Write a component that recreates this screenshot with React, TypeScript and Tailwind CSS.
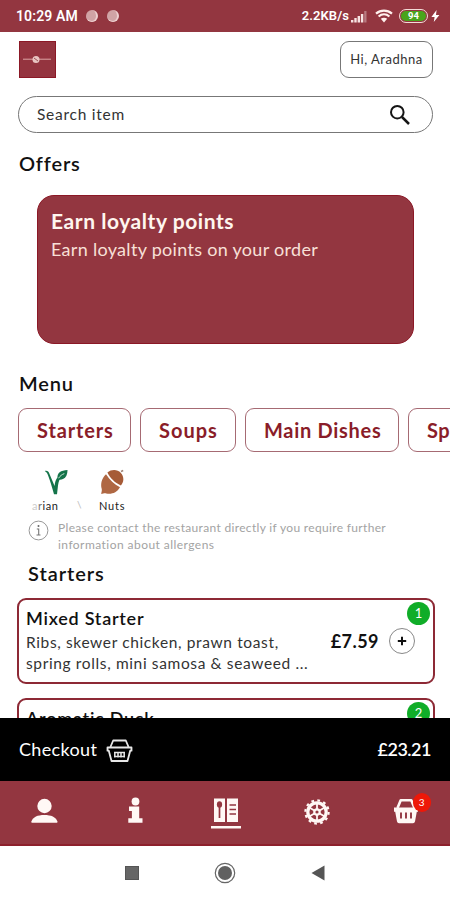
interface Category {
  label: string;
  width: string;
  tracking: string;
}

interface Dish {
  name: string;
  lines: string[];
  price?: string;
  count: number;
}

const categories: Category[] = [
  { label: 'Starters', width: 'w-[113px]', tracking: 'tracking-[0.85px]' },
  { label: 'Soups', width: 'w-24', tracking: 'tracking-[1px]' },
  { label: 'Main Dishes', width: 'w-[154px]', tracking: 'tracking-[0.7px]' },
  { label: 'Sp', width: 'w-[120px]', tracking: 'tracking-[0.5px]' },
];

const dishes: Dish[] = [
  {
    name: 'Mixed Starter',
    lines: ['Ribs, skewer chicken, prawn toast,', 'spring rolls, mini samosa & seaweed ...'],
    price: '£7.59',
    count: 1,
  },
  {
    name: 'Aromatic Duck',
    lines: [],
    count: 2,
  },
];

function StatusBar() {
  return (
    <div className="flex h-8 shrink-0 items-center justify-between bg-[#933640] pl-4 pr-[10px] font-['Roboto',sans-serif] text-white">
      <div className="flex items-center">
        <span className="w-[63px] whitespace-nowrap text-[14px] font-semibold tracking-[0.12px]">10:29 AM</span>
        <span className="ml-[7px] h-3 w-3 rounded-full border-r-2 border-b border-[#eed0d0] bg-[#d0a3a5]" />
        <span className="ml-[9px] h-3 w-3 rounded-full border-r-2 border-b border-[#eed0d0] bg-[#d0a3a5]" />
      </div>
      <div className="flex items-center">
        <span className="text-[13px] font-semibold tracking-[0.1px]">2.2KB/s</span>
        <svg className="ml-[2px]" width="17" height="13" viewBox="0 0 17 13">
          <path d="M0 10h2.4v2.5H0zM3.3 8h2.4v4.5H3.3zM6.6 6H9v6.5H6.6zM9.9 4h2.4v8.5H9.9z" fill="#f7e4e3" />
          <path d="M13.2 1h2.3v11.5h-2.3z" fill="#b87b81" />
        </svg>
        <svg className="ml-[7px]" width="18" height="14" viewBox="0 0 18 14" fill="none" stroke="#fff1ee" strokeWidth="2.2">
          <path d="M1 4.6C5.7.6 12.3.6 17 4.6M3.6 7.5c3.2-2.8 7.6-2.8 10.8 0" />
          <path d="M5.8 9.8c1.8-1.5 4.6-1.5 6.4 0L9 13.5z" fill="#fff1ee" stroke="none" />
        </svg>
        <span className="ml-[6px] flex h-[14px] w-[29px] items-center justify-center rounded-full border border-[#f3dcd8] p-px">
          <span className="flex h-full w-full items-center justify-center rounded-full bg-[#49a51c] text-[9.5px] font-bold">94</span>
        </span>
        <svg className="ml-[3px]" width="9" height="12" viewBox="0 0 9 12">
          <path d="M5.6 0 .4 7h3.2L2.8 12l5.6-7H5z" fill="#fff" />
        </svg>
      </div>
    </div>
  );
}

function TopBar() {
  return (
    <div className="mt-[9px] flex h-9 items-start justify-between pl-[19px] pr-[17px]">
      <div className="flex h-[37px] w-[37px] items-center justify-center border border-[#8b1826] bg-[#94343f]">
        <svg width="31" height="9" viewBox="0 0 31 9">
          <path d="M1 4.2h28" stroke="#dca6a6" strokeWidth="1" />
          <circle cx="14" cy="4.5" r="3.5" fill="#e9c5c2" />
          <path d="m12 3 4 3" stroke="#9c5157" />
        </svg>
      </div>
      <div className="flex h-[37px] w-[93px] items-center justify-center rounded-[9px] border border-[#777] text-[13px] tracking-[0.5px] text-[#333]">
        Hi, Aradhna
      </div>
    </div>
  );
}

function SearchBox() {
  return (
    <div className="ml-[18px] mr-[17px] mt-[19px] flex h-[37px] items-center justify-between rounded-full border border-[#777] pl-[18px] pr-[21px]">
      <span className="text-[15.5px] tracking-[0.75px] text-[#333]">Search item</span>
      <svg width="22" height="22" viewBox="0 0 22 22" fill="none" stroke="#151515">
        <circle cx="8.3" cy="8.2" r="6.3" strokeWidth="2" />
        <path d="m13 13 7 7" strokeWidth="2.5" />
      </svg>
    </div>
  );
}

function Allergens() {
  return (
    <div className="flex h-[62px] pl-8 pt-[17px] text-[11px] text-[#222]">
      <div className="flex w-[45px] flex-col">
        <svg className="ml-3 shrink-0" width="25" height="27" viewBox="0 0 25 27">
          <path d="M.8 2c2.5-.6 3.8.5 4.5 2.5L10.6 17C11.2 10.500 13.2 7.500 18.500 5.500 15.800 9 14.600 12 14 16.500l-1 8.700h-3C8 18 6 11.500 4.100 6.400 3.300 4.300 2.600 3.200.8 2z" fill="#14744a" />
          <path d="M13.7 9.6C12.300 4.400 17 1.200 23.500 1.100c-.1 7-3.400 9.900-8.300 9.600" fill="#14744a" />
          <path d="M14.500 9.300c1.700-2.500 3.400-3.800 5.800-4.700" stroke="#cae4d7" strokeWidth="1" fill="none" />
        </svg>
        <span className="mt-[3px] leading-[14px] tracking-[0.55px]">
          <span className="text-[#ccc]">a</span>
          <span className="text-[#777]">r</span>ian
        </span>
      </div>
      <span className="mt-[28px] w-[22px] text-[10px] leading-[14px] text-[#bbb]">\</span>
      <div className="flex flex-col">
        <svg className="shrink-0" width="27" height="27" viewBox="0 0 27 27">
          <path d="M8.4 3.5C12.2.2 18.4.2 21.7 3.7c3.700 4.100 3.300 9.300.200 12.700C15.500 13.500 11.500 9.500 8.400 3.500z" fill="#a65b37" />
          <path d="M7 5.200c3.800 5.800 8 9.800 14 13-3.200 5.600-8.300 7.200-13.800 6.200-1.900-.4-3 .3-5 .5.200-2.200 1-3.200.5-5.200C1.300 14.800 2.800 9 7 5.200z" fill="#af6743" />
          <path d="m22 2.500 2.200-1" stroke="#a08679" strokeWidth="1.5" />
        </svg>
        <span className="mt-[3px] leading-[14px] tracking-[0.8px]">Nuts</span>
      </div>
    </div>
  );
}

function DishCard({ dish }: { dish: Dish }) {
  return (
    <div className="relative flex h-[86px] shrink-0 justify-between rounded-[9px] border-2 border-[#8d2935] bg-white pl-[7px] pt-[6px]">
      <div>
        <h3 className="mb-[2px] text-[18px] font-semibold leading-6 tracking-[0.75px] text-[#111]">{dish.name}</h3>
        {dish.lines.map((line) => (
          <p key={line} className="whitespace-nowrap text-[15.5px] leading-[21px] tracking-[0.63px] text-[#333]">
            {line}
          </p>
        ))}
      </div>
      {dish.price && (
        <div className="mr-[18px] mt-[22px] flex h-[26px] items-center gap-[10px]">
          <span className="text-[18px] font-bold tracking-[0.45px] text-[#111]">{dish.price}</span>
          <span className="flex h-[26px] w-[26px] items-center justify-center rounded-full border border-[#888]">
            <svg width="10" height="10" viewBox="0 0 10 10">
              <path d="M5 .8v8.4M.8 5h8.4" stroke="#111" strokeWidth="2" />
            </svg>
          </span>
        </div>
      )}
      <span className="absolute right-[3px] top-[2px] flex h-[23px] w-[23px] items-center justify-center rounded-full bg-[#10ad28] text-[13px] text-white">
        {dish.count}
      </span>
    </div>
  );
}

function CheckoutBar() {
  return (
    <div className="z-10 flex h-[63px] shrink-0 items-center justify-between bg-black pl-[19px] pr-[19px] text-white">
      <div className="flex items-center gap-[9px]">
        <span className="text-[18px] tracking-[0.35px]">Checkout</span>
        <svg className="mt-[3px]" width="27" height="24" viewBox="0 0 27 24" fill="none" stroke="#e8e8e8" strokeWidth="1.8">
          <path d="M4.2 8.500 7.200 1.500h12.600l3 7M1.500 8.500h24v3.200h-1.300L21.500 22h-16L2.800 11.700H1.500z" strokeLinejoin="round" />
          <path d="M8.800 13v5.500M12 13v5.500M15 13v5.500M18.200 13v5.500M8 13.500h11M8 17.500h11" strokeWidth="1.500" />
        </svg>
      </div>
      <span className="text-[18px] font-semibold tracking-[-0.5px]">£23.21</span>
    </div>
  );
}

function TabBar() {
  return (
    <div className="z-10 flex h-[65px] shrink-0 justify-around border-b-2 border-[#8d202c] bg-[#933640] pt-[15px]">
      <svg className="mt-px" width="28" height="28" viewBox="0 0 28 28" fill="#fff8f5">
        <circle cx="14.500" cy="9" r="7.200" />
        <path d="M1.500 25.800v-1.500c1.500-4.300 6-6.300 12.800-6.300s11.500 2 13 6.300v1.500z" />
      </svg>
      <svg className="ml-[2px]" width="28" height="30" viewBox="0 0 28 30" fill="#fff8f5">
        <circle cx="14.500" cy="5.500" r="3.900" />
        <path d="M8 10.500h10.200v11.800h3.300v4.400H7.300v-4.400h3.600v-7.400H8z" />
      </svg>
      <svg width="32" height="34" viewBox="0 0 32 34">
        <path d="M4 2.500h11V26H4zM17 2.500h11V26H17z" fill="#fff8f5" />
        <path d="M1 30h30v2.500H1z" fill="#fff8f5" />
        <ellipse cx="9.500" cy="8.500" rx="2.600" ry="3.300" fill="#933640" />
        <path d="M9.500 10v12M19.500 9h6.500M19.500 13.500H26M19.500 18H26" stroke="#933640" strokeWidth="1.700" />
      </svg>
      <svg className="mt-[2px]" width="28" height="28" viewBox="0 0 28 28" fill="none" stroke="#fff8f5">
        <circle cx="14" cy="14" r="11.600" strokeWidth="2.200" strokeDasharray="2.700 3.374" />
        <circle cx="14" cy="14" r="9.200" strokeWidth="3.200" />
        <circle cx="14" cy="14" r="2.700" strokeWidth="2.200" />
        <path d="M14 5v6M14 17v6M6.200 9.500l5.200 3M16.600 15.500l5.200 3M21.800 9.500l-5.200 3M11.400 15.500l-5.200 3" strokeWidth="1.800" />
      </svg>
      <div className="relative h-7 w-7">
        <svg className="mt-[2px]" width="28" height="26" viewBox="0 0 28 26">
          <path d="m5.500 10 3.200-7.800h10.600l3.200 7.800" stroke="#fff8f5" strokeWidth="2.600" fill="none" strokeLinejoin="round" />
          <path d="M2 9.500h24v4.200h-1.200L23 23.500q-.4 1.700-2 1.700H7q-1.600 0-2-1.700L3.200 13.700H2z" fill="#fff8f5" />
          <path d="M9 14.500v6M14 14.500v6M19 14.500v6" stroke="#933640" strokeWidth="1.900" />
        </svg>
        <span className="absolute -right-[11px] -top-[3px] flex h-[19px] w-[18px] items-center justify-center rounded-full bg-[#ee1808] text-[10px] text-white">
          3
        </span>
      </div>
    </div>
  );
}

function SystemNav() {
  return (
    <div className="z-10 flex h-[54px] shrink-0 items-center justify-center gap-[75px] bg-white">
      <span className="h-[14px] w-[14px] border border-[#555] bg-[#666]" />
      <svg width="22" height="22" viewBox="0 0 22 22">
        <circle cx="11" cy="11" r="9.700" fill="none" stroke="#666" strokeWidth="1.200" />
        <circle cx="11" cy="11" r="7" fill="#606060" />
      </svg>
      <svg width="14" height="16" viewBox="0 0 14 16">
        <path d="M.5 8 13.500.5v15z" fill="#555" />
      </svg>
    </div>
  );
}

export default function App() {
  return (
    <div className="flex h-[900px] w-[450px] flex-col overflow-hidden bg-white font-['Lato',sans-serif] text-[#111]">
      <StatusBar />
      <main className="h-[686px] shrink-0 overflow-hidden">
        <TopBar />
        <SearchBox />
        <h2 className="ml-[19px] mt-[16px] text-[20px] font-semibold leading-7 tracking-[0.85px]">Offers</h2>
        <section className="ml-[37px] mt-[18px] h-[149px] w-[377px] rounded-[17px] border border-[#8b1826] bg-[#933640] pl-[13px] pt-[11px] text-[#fff6ef]">
          <h3 className="text-[21px] font-bold leading-7 tracking-[0.55px]">Earn loyalty points</h3>
          <p className="text-[18px] leading-7 tracking-[0.3px] text-[#f8e0d8]">Earn loyalty points on your order</p>
        </section>
        <h2 className="ml-[19px] mt-[25px] text-[20px] font-semibold leading-7 tracking-[0.85px]">Menu</h2>
        <div className="ml-[18px] mt-[11px] flex gap-[9px] overflow-hidden">
          {categories.map((category) => (
            <div
              key={category.label}
              className={`${category.width} ${category.tracking} flex h-11 shrink-0 items-center rounded-[9px] border border-[#a66a73] pb-px pl-[18px] text-[20px] font-bold whitespace-nowrap text-[#8a1d29]`}
            >
              {category.label}
            </div>
          ))}
        </div>
        <Allergens />
        <div className="mt-[5px] flex gap-[9px] pl-[28px] text-[12px] leading-[17px] text-[#a3a3a3]">
          <svg className="mt-px" width="21" height="21" viewBox="0 0 21 21">
            <circle cx="10.500" cy="10.500" r="9.400" fill="none" stroke="#999" />
            <circle cx="10.500" cy="6" r="1" fill="#666" />
            <path d="M8.800 9h1.900v6M8.500 15h4" fill="none" stroke="#777" strokeWidth="1.100" />
          </svg>
          <p>
            <span className="tracking-[0.33px]">Please contact the restaurant directly if you require further</span>
            <br />
            <span className="tracking-[0.45px]">information about allergens</span>
          </p>
        </div>
        <h2 className="ml-[28px] mt-[6px] text-[20px] font-semibold leading-7 tracking-[0.95px]">Starters</h2>
        <div className="ml-[17px] mt-[11px] flex w-[418px] flex-col gap-[14px]">
          {dishes.map((dish) => (
            <DishCard key={dish.name} dish={dish} />
          ))}
        </div>
      </main>
      <CheckoutBar />
      <TabBar />
      <SystemNav />
    </div>
  );
}
